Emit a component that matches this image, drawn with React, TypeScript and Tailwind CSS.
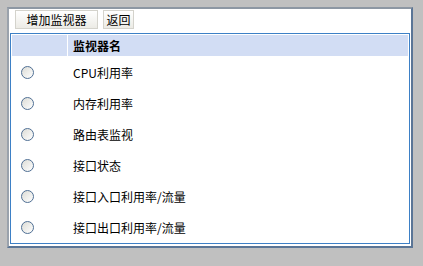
import React from "react";

const monitors = [
  "CPU利用率",
  "内存利用率",
  "路由表监视",
  "接口状态",
  "接口入口利用率/流量",
  "接口出口利用率/流量",
];

const font = { fontFamily: '"Noto Sans CJK SC", "Liberation Sans", sans-serif' };

// classic XP-style radio circle
const Radio = () => (
  <span className="block w-[13px] h-[13px] rounded-full border border-[#4f6f94] bg-gradient-to-br from-[#dcdcd6] to-white" />
);

export default function App() {
  return (
    <div className="w-[423px] h-[266px] bg-[#c0c0c0] pt-[7px] pl-[7px] text-[12px] text-black" style={font}>
      <div className="w-[406px] h-[241px] bg-white border-2 border-t-[#8d97a3] border-l-[#9aa2ac] border-r-[#5a7596] border-b-[#5a7596] flex flex-col">
        {/* toolbar */}
        <div className="flex gap-[5px] pl-[6px] pt-[1px] h-[24px] items-start">
          <button className="h-[19px] w-[83px] border border-[#d4d3cc] bg-gradient-to-b from-white to-[#ecebe5] leading-[17px] text-[12px]">
            增加监视器
          </button>
          <button className="h-[19px] w-[31px] border border-[#d4d3cc] bg-gradient-to-b from-white to-[#ecebe5] leading-[17px] text-[12px]">
            返回
          </button>
        </div>

        {/* list */}
        <div className="ml-[1px] mr-[1px] h-[211px] border border-[#3d80c6] p-[1px]">
          <div className="flex h-[21px] bg-[#d2ddf4]">
            <div className="w-[56px] border-r border-white" />
            <div className="pl-[5px] font-bold leading-[21px]">监视器名</div>
          </div>
          <div className="pt-[1px]">
            {monitors.map((name) => (
              <div key={name} className="flex items-center h-[31px]">
                <div className="w-[56px] pl-[9px]">
                  <Radio />
                </div>
                <div className="pl-[5px]">{name}</div>
              </div>
            ))}
          </div>
        </div>
      </div>
    </div>
  );
}
